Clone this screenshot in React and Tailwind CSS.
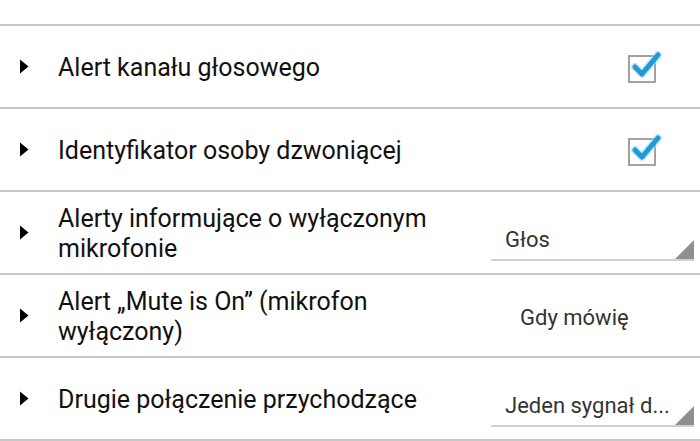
import React from "react";

const Arrow = () => (
  <svg width="10" height="15" viewBox="0 0 10 15" className="shrink-0">
    <polygon points="1,0.5 9.5,7.5 1,14.5" fill="#000" />
  </svg>
);

const Check = () => (
  <svg width="36" height="34" viewBox="0 0 36 34" className="block">
    <rect x="2" y="6" width="26" height="26" fill="#fff" stroke="#8a8a8a" strokeWidth="1.6" />
    <path d="M8 17 L15 24 L31 5" fill="none" stroke="#9fd6ef" strokeWidth="8" strokeLinecap="round" strokeLinejoin="round" opacity="0.6" />
    <path d="M8 17 L15 24 L31 5" fill="none" stroke="#1f9ad6" strokeWidth="5" strokeLinecap="round" strokeLinejoin="round" />
  </svg>
);

const Spinner = ({ text }) => (
  <div className="relative w-[203px] h-[44px] border-b-2 border-[#d0d0d0] flex items-center">
    <span className="pl-[14px] pt-[4px] text-[22px] text-[#333]">{text}</span>
    <svg width="19" height="19" viewBox="0 0 19 19" className="absolute right-0 bottom-0">
      <polygon points="19,0 19,19 0,19" fill="#8f8f8f" />
    </svg>
  </div>
);

const Row = ({ label, right }) => (
  <div className="h-[83px] border-b-2 border-[#c8c8c8] flex items-center">
    <div className="pl-[19px] w-[58px] shrink-0 flex items-center">
      <Arrow />
    </div>
    <div className="flex-1 text-[25px] leading-[30px] text-[#111] pr-2 pt-[3px]">{label}</div>
    <div className="w-[209px] shrink-0 flex items-center">{right}</div>
  </div>
);

export default function App() {
  return (
    <div className="w-[700px] h-[441px] bg-white overflow-hidden" style={{ fontFamily: "Roboto, 'Noto Sans', sans-serif" }}>
      <div className="h-[26px] border-b-2 border-[#c8c8c8]" />
      <Row
        label="Alert kanału głosowego"
        right={<div className="ml-[136px]"><Check /></div>}
      />
      <Row
        label="Identyfikator osoby dzwoniącej"
        right={<div className="ml-[136px]"><Check /></div>}
      />
      <Row
        label={<>Alerty informujące o wyłączonym<br />mikrofonie</>}
        right={<div className="mt-[12px]"><Spinner text="Głos" /></div>}
      />
      <Row
        label={<>Alert „Mute is On” (mikrofon<br />wyłączony)</>}
        right={<span className="pl-[29px] pt-[4px] text-[22px] text-[#333]">Gdy mówię</span>}
      />
      <Row
        label="Drugie połączenie przychodzące"
        right={<div className="mt-[12px]"><Spinner text="Jeden sygnał d..." /></div>}
      />
    </div>
  );
}
